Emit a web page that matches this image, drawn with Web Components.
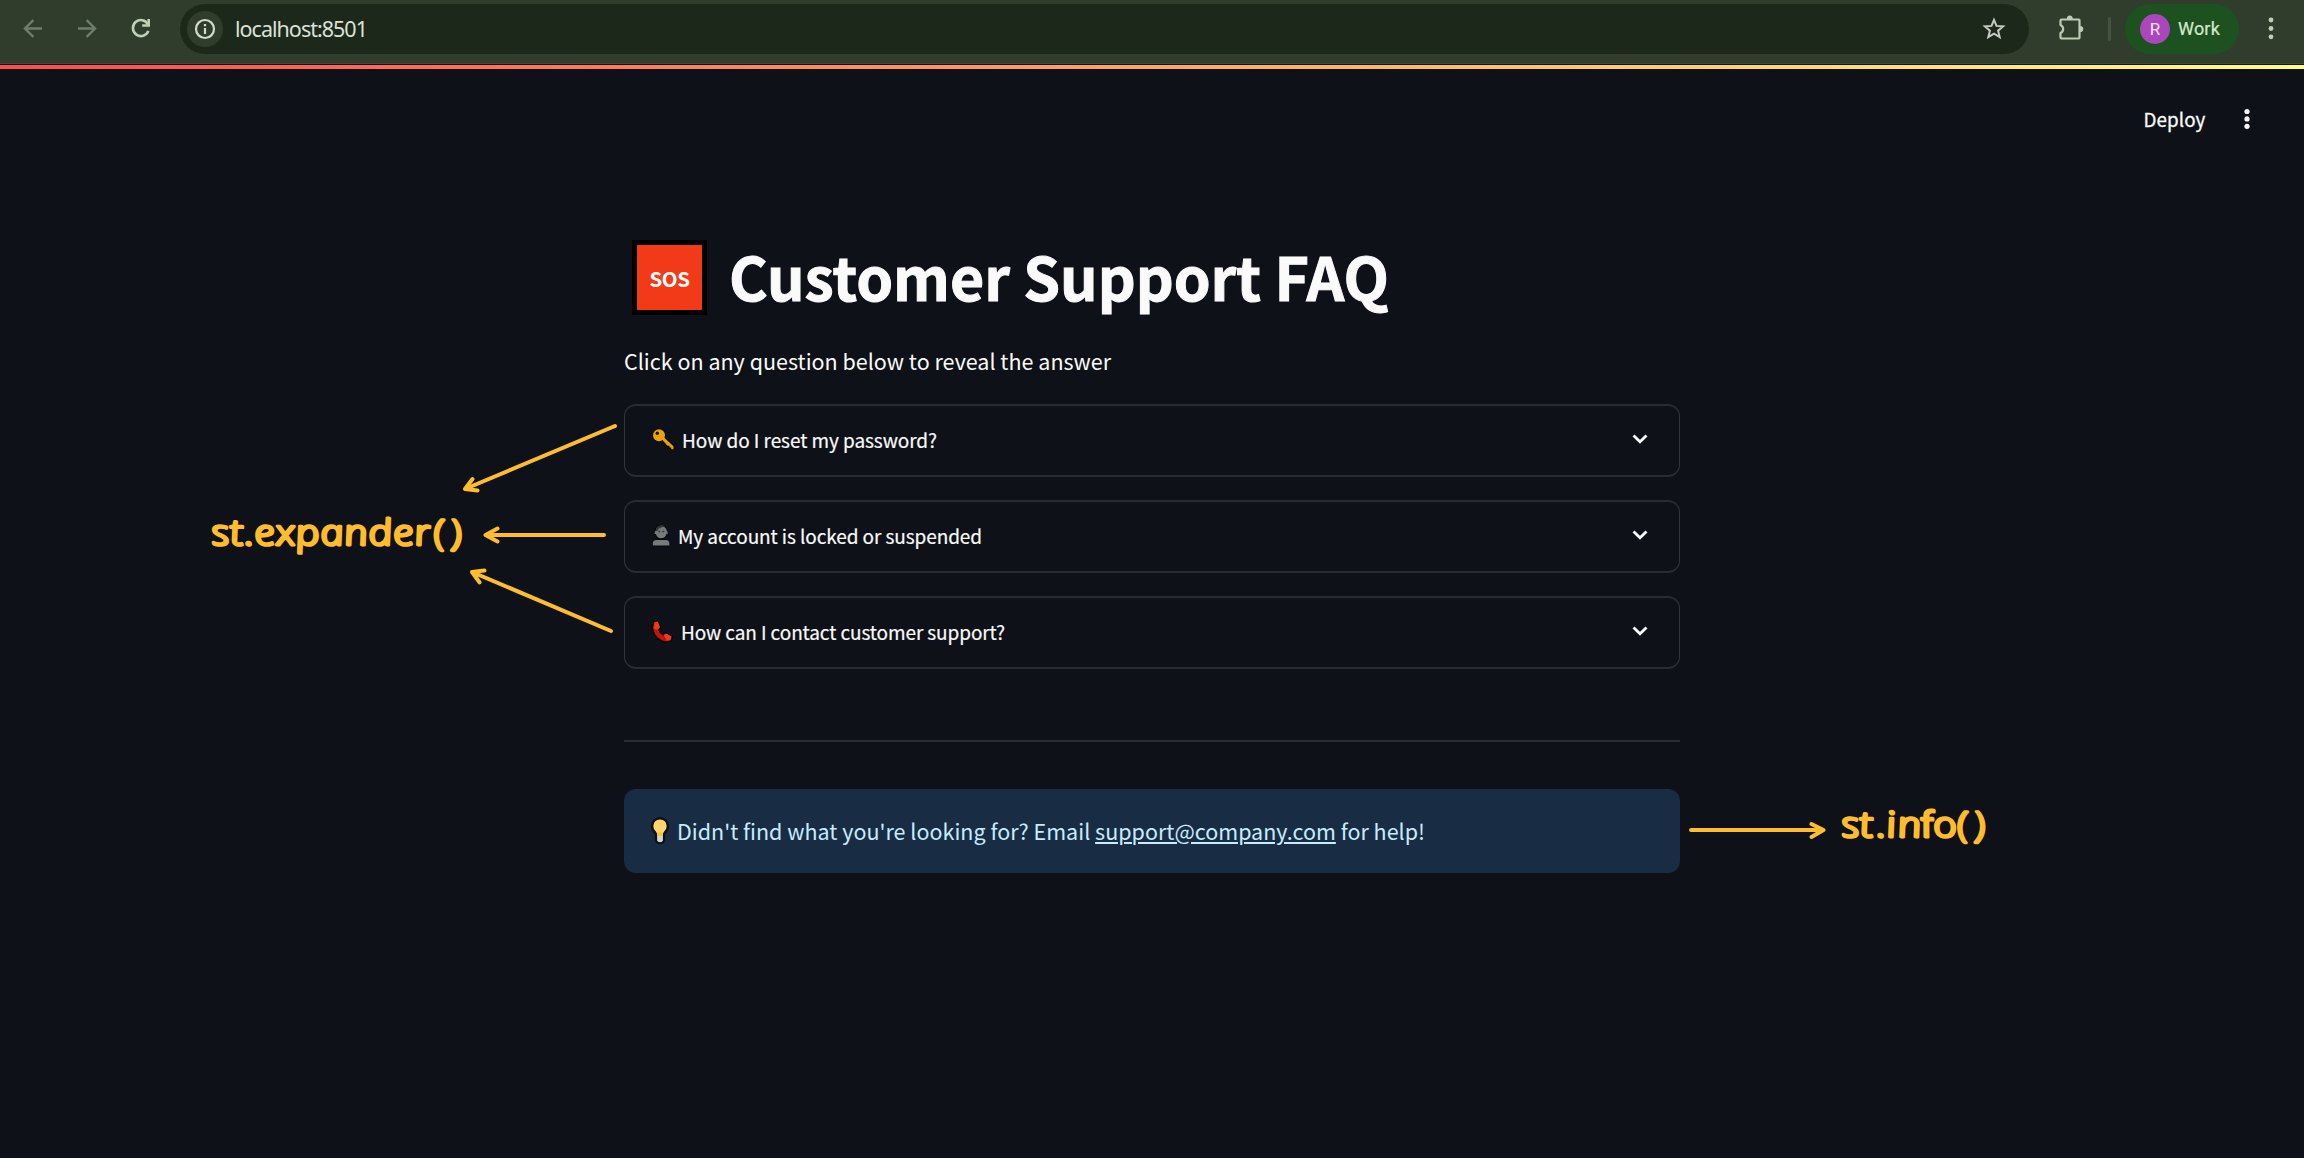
<!DOCTYPE html>
<html lang="en">
<head>
<meta charset="utf-8">
<title>Customer Support FAQ</title>
<style>
html,body{margin:0;background:#0e1117}
body{width:2304px;height:1158px;overflow:hidden;position:relative;font-family:"Noto Sans CJK SC","Noto Sans",sans-serif;color:#fafafa}
</style>
</head>
<body>
<faq-page></faq-page>
<script>
class Base extends HTMLElement{
  constructor(){super();this.attachShadow({mode:'open'});}
  render(html){this.shadowRoot.innerHTML=html;}
}

// Text whose tracking is adjusted so that the run has the width given in "w".
class FitText extends Base{
  connectedCallback(){
    this.render(`<style>:host{display:inline-block;white-space:pre}span{display:inline-block}</style><span><slot></slot></span>`);
    const s=this.shadowRoot.querySelector('span');
    const w=parseFloat(this.getAttribute('w')), n=this.textContent.length;
    const nat=s.getBoundingClientRect().width;
    this.style.width=w+'px';
    s.style.letterSpacing=((w-nat)/n)+'px';
  }
}

class BrowserBar extends Base{
  connectedCallback(){this.render(`
<style>
:host{display:flex;align-items:center;height:64px;background:#303d2d;box-sizing:border-box;border-bottom:1px solid #3f4b3d;padding-bottom:5px}
svg{display:block;flex:none}
.nav{display:flex;gap:24px;padding-left:18px;margin-right:24px}
.addr{width:1849px;height:50px;border-radius:25px;background:#1c2819;display:flex;align-items:center;box-sizing:border-box;padding:0 18px 0 7px;flex:none}
.info{width:36px;height:36px;border-radius:50%;background:#303d2d;display:flex;align-items:center;justify-content:center;margin-right:12px}
.url{font:21.500px/30px "Noto Sans",sans-serif;color:#dbe0d9;flex:1;margin-top:-1px}
.puz{margin-left:25px}
.div{width:3px;height:24px;border-radius:2px;background:#44543f;margin-left:20px}
.chip{width:114px;height:50px;border-radius:25px;background:#1e5120;margin-left:14px;box-sizing:border-box;padding-left:15px;display:flex;align-items:center;gap:8px;font:400 18px/24px Roboto,sans-serif;color:#d5e8cd;flex:none;margin-top:-1px}
.chip fit-text{-webkit-text-stroke:.2px currentColor}
.av{width:30px;height:30px;border-radius:50%;background:#ab47bc;display:flex;align-items:center;justify-content:center;font:400 17px/30px Roboto,sans-serif;color:#f6e6f8}
.more{margin-left:20px;margin-top:-1px}
</style>
<div class="nav">
<svg width="30" height="30" viewBox="0 0 30 30" fill="none" stroke="#6e7d69" stroke-width="2.4"><path d="M24 14.500H7M15.300 6.200 7 14.500l8.300 8.300"/></svg>
<svg width="30" height="30" viewBox="0 0 30 30" fill="none" stroke="#6e7d69" stroke-width="2.400"><path d="M6 14.500h17M14.700 6.200 23 14.500l-8.300 8.300"/></svg>
<svg width="30" height="30" viewBox="0 0 30 30" fill="none" stroke="#bdd0b6" stroke-width="2.600"><path d="M22 10.300A8 8 0 1 0 22.400 16.900"/><path d="M22.700 5v6.500h-6.500"/></svg>
</div>
<div class="addr">
<div class="info"><svg width="22" height="22" viewBox="0 0 22 22"><circle cx="11" cy="11" r="9" fill="none" stroke="#d3dbd0" stroke-width="2.200"/><path d="M11 10v6M11 6v2.200" stroke="#d3dbd0" stroke-width="2.200"/></svg></div>
<div class="url"><fit-text w="132">localhost:8501</fit-text></div>
<svg width="34" height="30" viewBox="0 0 34 30"><path d="M17 5.800l2.500 6.100 6.600.500-5 4.300 1.600 6.400L17 19.700l-5.700 3.400 1.600-6.400-5-4.300 6.600-.500z" fill="none" stroke="#c6c9c2" stroke-width="2"/></svg>
</div>
<svg class="puz" width="34" height="30" viewBox="0 0 34 30"><path d="M7.500 5.500h17.300q.700 0 .700.700v17.600q0 .700-.700.700H7.500q-1 0-1-1v-4.400a4.500 4.500 0 0 0 0-8.200V6.500q0-1 1-1z" fill="none" stroke="#bacdb3" stroke-width="2.200" stroke-linejoin="round"/><path d="M12.800 5a3 3.600 0 0 1 6 0zM26 12a3.200 3 0 0 1 0 6.200z" fill="#bacdb3"/></svg>
<div class="div"></div>
<div class="chip"><div class="av">R</div><fit-text w="42">Work</fit-text></div>
<svg class="more" width="24" height="30" viewBox="0 0 24 30" fill="#bdd0b6"><circle cx="12" cy="6" r="2.400"/><circle cx="12" cy="14.500" r="2.400"/><circle cx="12" cy="22.800" r="2.400"/></svg>
`);}
}

class AppHeader extends Base{
  connectedCallback(){this.render(`
<style>
:host{display:block}
.deco{height:4px;background:linear-gradient(90deg,#ff4b4b,#fffd80);margin-top:1px}
.row{display:flex;justify-content:flex-end;align-items:center;height:50px;padding:25px 42px 0 0;font-size:18.800px;line-height:28px;font-weight:400}
.row fit-text{-webkit-text-stroke:.3px currentColor;margin-top:-1px}
.row svg{margin-left:26.500px}
</style>
<div class="deco"></div>
<div class="row"><fit-text w="62">Deploy</fit-text><svg width="30" height="30" viewBox="0 0 30 30" fill="#fafafa"><circle cx="15" cy="7.500" r="2.600"/><circle cx="15" cy="14.900" r="2.600"/><circle cx="15" cy="22.300" r="2.600"/></svg></div>
`);}
}

class FaqTitle extends Base{
  connectedCallback(){this.render(`
<style>
:host{display:flex;align-items:center;height:76px;padding-left:8px}
.sos{width:65px;height:65px;border:5px solid #000;background:#f23a18;display:flex;align-items:center;justify-content:center;font-size:20.500px;line-height:30px;font-weight:700;color:#fff;flex:none;margin-top:-1px}
h1{margin:-4px 0 0 22px;font-size:59px;line-height:80px;font-weight:700;-webkit-text-stroke:1px currentColor}
</style>
<div class="sos"><fit-text w="40">SOS</fit-text></div><h1><fit-text w="660">Customer Support FAQ</fit-text></h1>
`);}
}

const ICONS={
key:`<svg width="31" height="28" viewBox="0 0 31 28"><g transform="translate(0 1)"><g stroke="#050608" stroke-width="2.600" stroke-linejoin="round" fill="#050608"><circle cx="8" cy="8.200" r="5.600"/><path d="M10.500 12.500l2.200-2.200L22.500 19v2.700h-2.200z"/></g><path d="M11 12.600l2-2L22.500 19.300v2.900h-2.300v-1.700h-1.700v-1.800h-2z" fill="#eba300"/><circle cx="8" cy="8.200" r="6" fill="#eba300"/><circle cx="6.300" cy="6.300" r="1.700" fill="#12100b"/></g></svg>`,
person:`<svg width="27" height="28" viewBox="0 0 27 28"><g transform="translate(0 1)"><path d="M3.400 7.500a6.600 6.600 0 0 1 13 0v3q-1 4-3.400 5.500 6 .700 6 6.200v1H1v-1q.200-5.700 6-6.200Q4.500 14 3.600 10z" fill="#050608"/><path d="M4.600 8a5.700 5.700 0 0 1 11.200 0l.800.700v2.200h-1.200q-1 4.300-5.200 4.300T5 10.900H3.700V8.700z" fill="#777a7b"/><path d="M4.700 8a5.700 5.700 0 0 1 9.600-4.300Q7.500 4 6.300 8z" fill="#343536"/><path d="M1.800 22.500v-2q0-3.600 3.600-3.600h9.400q3.600 0 3.600 3.600v2z" fill="#777a7b"/><path d="M7.400 8.400h1.700M11.600 8.400h1.700" stroke="#303132" stroke-width="1.500"/></g></svg>`,
phone:`<svg width="30" height="28" viewBox="0 0 30 28"><g transform="translate(0 2)"><path d="M3.500 2.500l3.200-1 2.300 6-2.400 2.200q2 4.300 5.700 6l2.700-2.200 5.500 3-1.200 4-4 .800Q3.500 19.500 2 7z" fill="#c01414" stroke="#050608" stroke-width="3" stroke-linejoin="round"/><path d="M3.500 2.500l3.200-1 2.300 6-2.400 2.200q2 4.300 5.700 6l2.700-2.200 5.500 3-1.200 4-4 .800Q3.500 19.500 2 7z" fill="#c01414"/><path d="M3.500 2.500l3.200-1 2.300 6-3 2.300-3-1zM12.600 15.300l2.400-1.800 5.500 3-1 3.400-3.500.500z" fill="#f23a18"/></g></svg>`
};

class StExpander extends Base{
  connectedCallback(){this.render(`
<style>
:host{display:flex;align-items:center;height:73px;border:solid #282b30;border-width:2px 1px;border-left-color:#303338;border-right-color:#303338;border-radius:12px;box-sizing:border-box;padding:0 24px 0 26px;font-size:19px;line-height:28px}
.i{display:flex;flex:none}.t{flex:1;margin-top:-1px}
svg{margin-top:-1px}
::slotted(*){-webkit-text-stroke:.2px currentColor}
</style>
<span class="i">${ICONS[this.getAttribute('icon')]}</span><span class="t"><slot></slot></span>
<svg width="30" height="30" viewBox="0 0 30 30" fill="none" stroke="#fafafa" stroke-width="2.800"><path d="M8.500 10.400l6.500 6.400 6.500-6.400"/></svg>
`);}
}

class StInfo extends Base{
  connectedCallback(){this.render(`
<style>
:host{display:flex;align-items:center;height:84px;border-radius:12px;background:#182d43;color:#c7ebff;box-sizing:border-box;padding-left:26px;font-size:21.500px;line-height:32px}
</style>
<svg width="27" height="32" viewBox="0 0 27 32"><g transform="translate(0 1)"><path d="M10 2.200a7.800 7.800 0 0 1 7.900 8q0 3.700-3 6.300-1 1.200-1 3.500v4.500q-.500 2.500-3.900 2.500t-3.900-2.500V20q0-2.300-1-3.500-3-2.600-3-6.300a7.800 7.800 0 0 1 7.900-8z" fill="#ffd36b" stroke="#0b1118" stroke-width="2.400"/><path d="M7.200 16.500h5.800v3.700H7.200z" fill="#f9c23c"/><path d="M7.400 20.200h5.400v4.300q-.500 1.700-2.700 1.700t-2.700-1.700z" fill="#d3d3d6"/></g></svg>
<slot></slot>
`);}
}

class FaqNotes extends Base{
  connectedCallback(){this.render(`
<style>
:host{position:absolute;left:0;top:0;width:2304px;height:1158px;pointer-events:none}
svg{display:block}
text{font:italic 300 35.500px "Open Sans",sans-serif;fill:#ffbd2e;stroke:#ffbd2e;stroke-width:3;stroke-linejoin:round;stroke-linecap:round}
.f{font-family:Roboto,sans-serif}
</style>
<svg width="2304" height="1158" viewBox="0 0 2304 1158">
<text transform="translate(213.500 544.500) scale(1.17 1) skewX(10)"><tspan textLength="187" lengthAdjust="spacing">st.expander</tspan><tspan x="189.500 205">()</tspan></text>
<text transform="translate(1843.500 836.500) scale(1.17 1) skewX(10)"><tspan x="0 15.500 29.500 38.500 48">st.in</tspan><tspan class="f" x="67.500">f</tspan><tspan x="78.500">o</tspan><tspan x="98.500 114">()</tspan></text>
<g fill="none" stroke="#ffbd2e" stroke-width="4" stroke-linecap="round" stroke-linejoin="round">
<path d="M615 426 465 489M472.500 479l-7.500 10 12.500 1.500"/>
<path d="M604 535H486M497.500 528.500l-12 6.500 12 6.500"/>
<path d="M611 631 472 572M484.500 570.500l-12.500 1.500 7.500 10.300"/>
<path d="M1691 830h132M1811.500 824l12 6-12 7"/>
</g></svg>
`);}
}

class FaqPage extends Base{
  connectedCallback(){this.render(`
<style>
:host{display:block}
main{width:1056px;margin:0 auto;padding-top:96px}
p{margin:27px 0 0;font-size:21.500px;line-height:36px;height:36px}
.list{display:flex;flex-direction:column;gap:23px;margin-top:25px}
hr{border:0;height:2px;background:#2a2c31;margin:71px 0 47px}
a{color:inherit;text-decoration:underline;text-decoration-thickness:2px;text-underline-offset:2px}
</style>
<browser-bar></browser-bar>
<app-header></app-header>
<main>
<faq-title></faq-title>
<p><fit-text w="487">Click on any question below to reveal the answer</fit-text></p>
<div class="list">
<st-expander icon="key"><fit-text w="255">How do I reset my password?</fit-text></st-expander>
<st-expander icon="person"><fit-text w="304">My account is locked or suspended</fit-text></st-expander>
<st-expander icon="phone"><fit-text w="324">How can I contact customer support?</fit-text></st-expander>
</div>
<hr>
<st-info><fit-text w="748">Didn't find what you're looking for? Email <a>support@company.com</a> for help!</fit-text></st-info>
</main>
<faq-notes></faq-notes>
`);}
}
for(const [n,c] of [['fit-text',FitText],['browser-bar',BrowserBar],['app-header',AppHeader],['faq-title',FaqTitle],['st-expander',StExpander],['st-info',StInfo],['faq-notes',FaqNotes],['faq-page',FaqPage]])customElements.define(n,c);
</script>
</body>
</html>
